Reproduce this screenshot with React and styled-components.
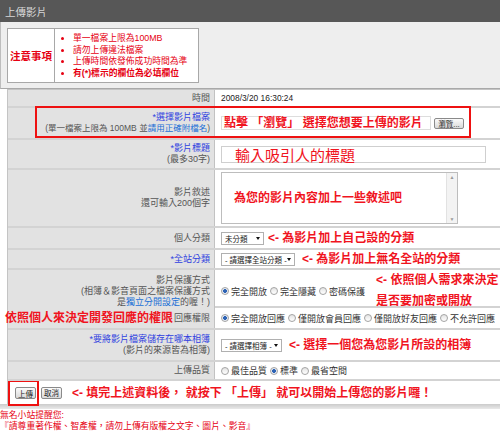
import styled, { createGlobalStyle } from "styled-components";

const GlobalStyle = createGlobalStyle`
  body {
    margin: 0;
    background: #ffffff;
    font-family: "Liberation Sans", "Noto Sans CJK TC", sans-serif;
  }
`

const Page = styled.div`
  width: 500px;
  height: 431px;
  overflow: hidden;
`

const TitleBar = styled.div`
  display: flex;
  align-items: center;
  height: 22px;
  padding-left: 5px;
  background: #575757;
  color: #d8d8d8;
  font-size: 10.5px;
`

const NoticePanel = styled.div`
  box-sizing: border-box;
  height: 67px;
  padding: 6px 0 0 6px;
  background: #eeeeee;
  border-left: 1px solid #bdbdbd;
  border-bottom: 1px solid #a9a9a9;
`

const NoticeBox = styled.div`
  display: grid;
  grid-template-columns: 47px 1fr;
  box-sizing: border-box;
  width: 192px;
  height: 55px;
  background: #ffffff;
  border: 1px solid #a8a8a8;
`

const NoticeHead = styled.div`
  display: flex;
  align-items: center;
  justify-content: center;
  border-right: 1px solid #a8a8a8;
  color: #e60012;
  font-size: 10.5px;
  font-weight: bold;
`

const NoticeList = styled.ul`
  margin: 0;
  padding: 4px 0 0 18px;
  color: #e60012;
  font-size: 8.8px;
  line-height: 11.6px;
`

const NoticeItem = styled.li`
  font-weight: ${({ $strong }) => ($strong ? "bold" : "normal")};
  white-space: nowrap;
`

const Form = styled.div`
  width: 520px;
  margin-left: 7px;
  border-top: 1px solid #c4c4c4;
  border-left: 1px solid #c4c4c4;
`

const Row = styled.div`
  position: relative;
  display: grid;
  grid-template-columns: 207px 1fr;
  box-sizing: border-box;
  height: ${({ $h }) => $h}px;
  border-bottom: 2px solid #d3d3d3;
`

const Label = styled.div`
  position: relative;
  display: flex;
  flex-direction: column;
  justify-content: center;
  align-items: flex-end;
  padding-right: 4px;
  background: #e2e2e2;
  border-right: 1px solid #c2c2c2;
  color: #555555;
  font-size: 9px;
  line-height: 11px;
  text-align: right;
  white-space: nowrap;
`

const Required = styled.span`
  color: #2f3fe0;
`

const SmallLine = styled.span`
  font-size: 8.5px;
`

const TextLink = styled.span`
  color: #1a6fd6;
`

const Value = styled.div`
  display: flex;
  align-items: center;
  gap: ${({ $gap }) => $gap ?? 4}px;
  padding-left: 6px;
  color: #333333;
  font-size: 9px;
  white-space: nowrap;
`

const DateText = styled.span`
  font-size: 8.4px;
  color: #222222;
`

const Note = styled.span`
  color: #f0141e;
  font-size: 12px;
  font-weight: bold;
  line-height: ${({ $lh }) => $lh ?? 14}px;
  white-space: nowrap;
`

const NoteBlock = styled.div`
  display: flex;
  flex-direction: column;
  margin-left: ${({ $ml }) => $ml ?? 0}px;
`

const LabelNote = styled(Note)`
  position: absolute;
  left: -3px;
  top: 3px;
`

const RedFrame = styled.div`
  position: absolute;
  left: 27px;
  top: -2px;
  width: 436px;
  height: 32px;
  box-sizing: border-box;
  border: 2px solid #ee1111;
  pointer-events: none;
`

const FileField = styled.div`
  display: flex;
  align-items: center;
  box-sizing: border-box;
  width: 210px;
  height: 14px;
  padding-left: 2px;
  border: 1px solid #dddddd;
  overflow: visible;
`

const Button = styled.span`
  display: inline-flex;
  align-items: center;
  justify-content: center;
  box-sizing: border-box;
  width: ${({ $w }) => $w}px;
  height: ${({ $h }) => $h ?? 12}px;
  margin-left: ${({ $ml }) => $ml ?? 0}px;
  border: 1px solid #8a8a8a;
  border-radius: 2px;
  background: linear-gradient(#fbfbfb, #d9d9d9);
  color: #222222;
  font-size: 7.5px;
`

const TitleField = styled.div`
  display: flex;
  align-items: center;
  box-sizing: border-box;
  width: 265px;
  height: 17px;
  padding-left: 13px;
  border: 1px solid #cfcfcf;
  color: #f0141e;
  font-size: 15px;
`

const TextArea = styled.div`
  display: flex;
  box-sizing: border-box;
  width: 237px;
  height: 52px;
  border: 1px solid #bdbdbd;
`

const TextAreaBody = styled.div`
  flex: 1;
  display: flex;
  align-items: center;
  padding-left: 12px;
`

const ScrollBar = styled.div`
  display: flex;
  flex-direction: column;
  justify-content: space-between;
  align-items: center;
  width: 10px;
  background: #f3f3f3;
  border-left: 1px solid #e2e2e2;
  color: #9a9a9a;
  font-size: 5px;
  line-height: 8px;
`

const Select = styled.div`
  display: flex;
  align-items: center;
  justify-content: space-between;
  box-sizing: border-box;
  width: ${({ $w }) => $w}px;
  height: 13px;
  padding: 0 3px;
  border: 1px solid #b0b0b0;
  background: #ffffff;
  color: #222222;
  font-size: 7.5px;
`

const Caret = styled.span`
  width: 0;
  height: 0;
  border-left: 2.5px solid transparent;
  border-right: 2.5px solid transparent;
  border-top: 3px solid #111111;
`

const Choice = styled.span`
  display: inline-flex;
  align-items: center;
  gap: 2px;
  margin-right: 3px;
  color: #333333;
`

const Radio = styled.span`
  display: inline-block;
  box-sizing: border-box;
  width: 8px;
  height: 8px;
  border-radius: 50%;
  border: 1px solid #a3a3a3;
  background: ${({ $on }) =>
    $on
      ? "radial-gradient(circle, #2d63b5 0 1.6px, #e9eef5 2.2px)"
      : "linear-gradient(#e4e4e4, #ffffff)"};
`

const ButtonRow = styled.div`
  display: flex;
  align-items: center;
  height: 23px;
  background: #ffffff;
`

const ButtonFrame = styled.div`
  display: flex;
  align-items: center;
  justify-content: flex-end;
  box-sizing: border-box;
  width: 31px;
  height: 26px;
  margin-top: 1px;
  padding-right: 1px;
  border: 2px solid #ee1111;
`

const BottomBar = styled.div`
  height: 5px;
  background: linear-gradient(#cbcbcb, #e9e9e9);
`

const Footer = styled.div`
  padding-top: 1px;
  color: #e60012;
  font-size: 8.8px;
  line-height: 10.5px;
  white-space: nowrap;
`

const Choices = ({ items, on }) => (
  <>
    {items.map((item) => (
      <Choice key={item}>
        <Radio $on={item === on} />
        {item}
      </Choice>
    ))}
  </>
)

export default function App() {
  return (
    <Page>
      <GlobalStyle />
      <TitleBar>上傳影片</TitleBar>

      <NoticePanel>
        <NoticeBox>
          <NoticeHead>注意事項</NoticeHead>
          <NoticeList>
            <NoticeItem>單一檔案上限為100MB</NoticeItem>
            <NoticeItem>請勿上傳違法檔案</NoticeItem>
            <NoticeItem>上傳時間依發佈成功時間為準</NoticeItem>
            <NoticeItem $strong>有(*)標示的欄位為必填欄位</NoticeItem>
          </NoticeList>
        </NoticeBox>
      </NoticePanel>

      <Form>
        <Row $h={18}>
          <Label>時間</Label>
          <Value>
            <DateText>2008/3/20 16:30:24</DateText>
          </Value>
        </Row>

        <Row $h={32}>
          <Label>
            <Required>*選擇影片檔案</Required>
            <SmallLine>
              (單一檔案上限為 100MB 並<TextLink>請用正確附檔名</TextLink>)
            </SmallLine>
          </Label>
          <Value $gap={3}>
            <FileField>
              <Note>點擊 「瀏覽」 選擇您想要上傳的影片</Note>
            </FileField>
            <Button $w={30} $h={11}>瀏覽...</Button>
          </Value>
          <RedFrame />
        </Row>

        <Row $h={30}>
          <Label>
            <Required>*影片標題</Required>
            <span>(最多30字)</span>
          </Label>
          <Value>
            <TitleField>輸入吸引人的標題</TitleField>
          </Value>
        </Row>

        <Row $h={58}>
          <Label>
            <span>影片敘述</span>
            <span>還可輸入200個字</span>
          </Label>
          <Value>
            <TextArea>
              <TextAreaBody>
                <Note>為您的影片內容加上一些敘述吧</Note>
              </TextAreaBody>
              <ScrollBar>
                <span>▲</span>
                <span>▼</span>
              </ScrollBar>
            </TextArea>
          </Value>
        </Row>

        <Row $h={22}>
          <Label>個人分類</Label>
          <Value>
            <Select $w={43}>
              未分類 <Caret />
            </Select>
            <Note>&lt;- 為影片加上自己設的分類</Note>
          </Value>
        </Row>

        <Row $h={20}>
          <Label>
            <Required>*全站分類</Required>
          </Label>
          <Value $gap={7}>
            <Select $w={74}>
              - 請選擇全站分類 - <Caret />
            </Select>
            <Note>&lt;- 為影片加上無名全站的分類</Note>
          </Value>
        </Row>

        <Row $h={38}>
          <Label>
            <span>影片保護方式</span>
            <span>(相簿＆影音頁面之檔案保護方式</span>
            <span>
              是<TextLink>獨立分開設定</TextLink>的喔！)
            </span>
          </Label>
          <Value $gap={0}>
            <Choices items={["完全開放", "完全隱藏", "密碼保護"]} on="完全開放" />
            <NoteBlock $ml={8}>
              <Note $lh={21}>&lt;- 依照個人需求來決定</Note>
              <Note $lh={21}>是否要加密或開放</Note>
            </NoteBlock>
          </Value>
        </Row>

        <Row $h={22}>
          <Label>
            <LabelNote>依照個人來決定開發回應的權限</LabelNote>
            回應權限
          </Label>
          <Value $gap={0}>
            <Choices
              items={["完全開放回應", "僅開放會員回應", "僅開放好友回應", "不允許回應"]}
              on="完全開放回應"
            />
          </Value>
        </Row>

        <Row $h={32}>
          <Label>
            <Required>*要將影片檔案儲存在哪本相簿</Required>
            <span>(影片的來源皆為相簿)</span>
          </Label>
          <Value $gap={7}>
            <Select $w={61}>
              - 請選擇相簿 - <Caret />
            </Select>
            <Note>&lt;- 選擇一個您為您影片所設的相簿</Note>
          </Value>
        </Row>

        <Row $h={19}>
          <Label>上傳品質</Label>
          <Value $gap={0}>
            <Choices items={["最佳品質", "標準", "最省空間"]} on="標準" />
          </Value>
        </Row>

        <ButtonRow>
          <ButtonFrame>
            <Button $w={21}>上傳</Button>
          </ButtonFrame>
          <Button $w={21} $ml={2}>取消</Button>
          <NoteBlock $ml={10}>
            <Note>&lt;- 填完上述資料後， 就按下 「上傳」 就可以開始上傳您的影片囉！</Note>
          </NoteBlock>
        </ButtonRow>
      </Form>

      <BottomBar />

      <Footer>
        <div>無名小站提醒您:</div>
        <div>『請尊重著作權、智產權，請勿上傳有版權之文字、圖片、影音』</div>
      </Footer>
    </Page>
  );
}
